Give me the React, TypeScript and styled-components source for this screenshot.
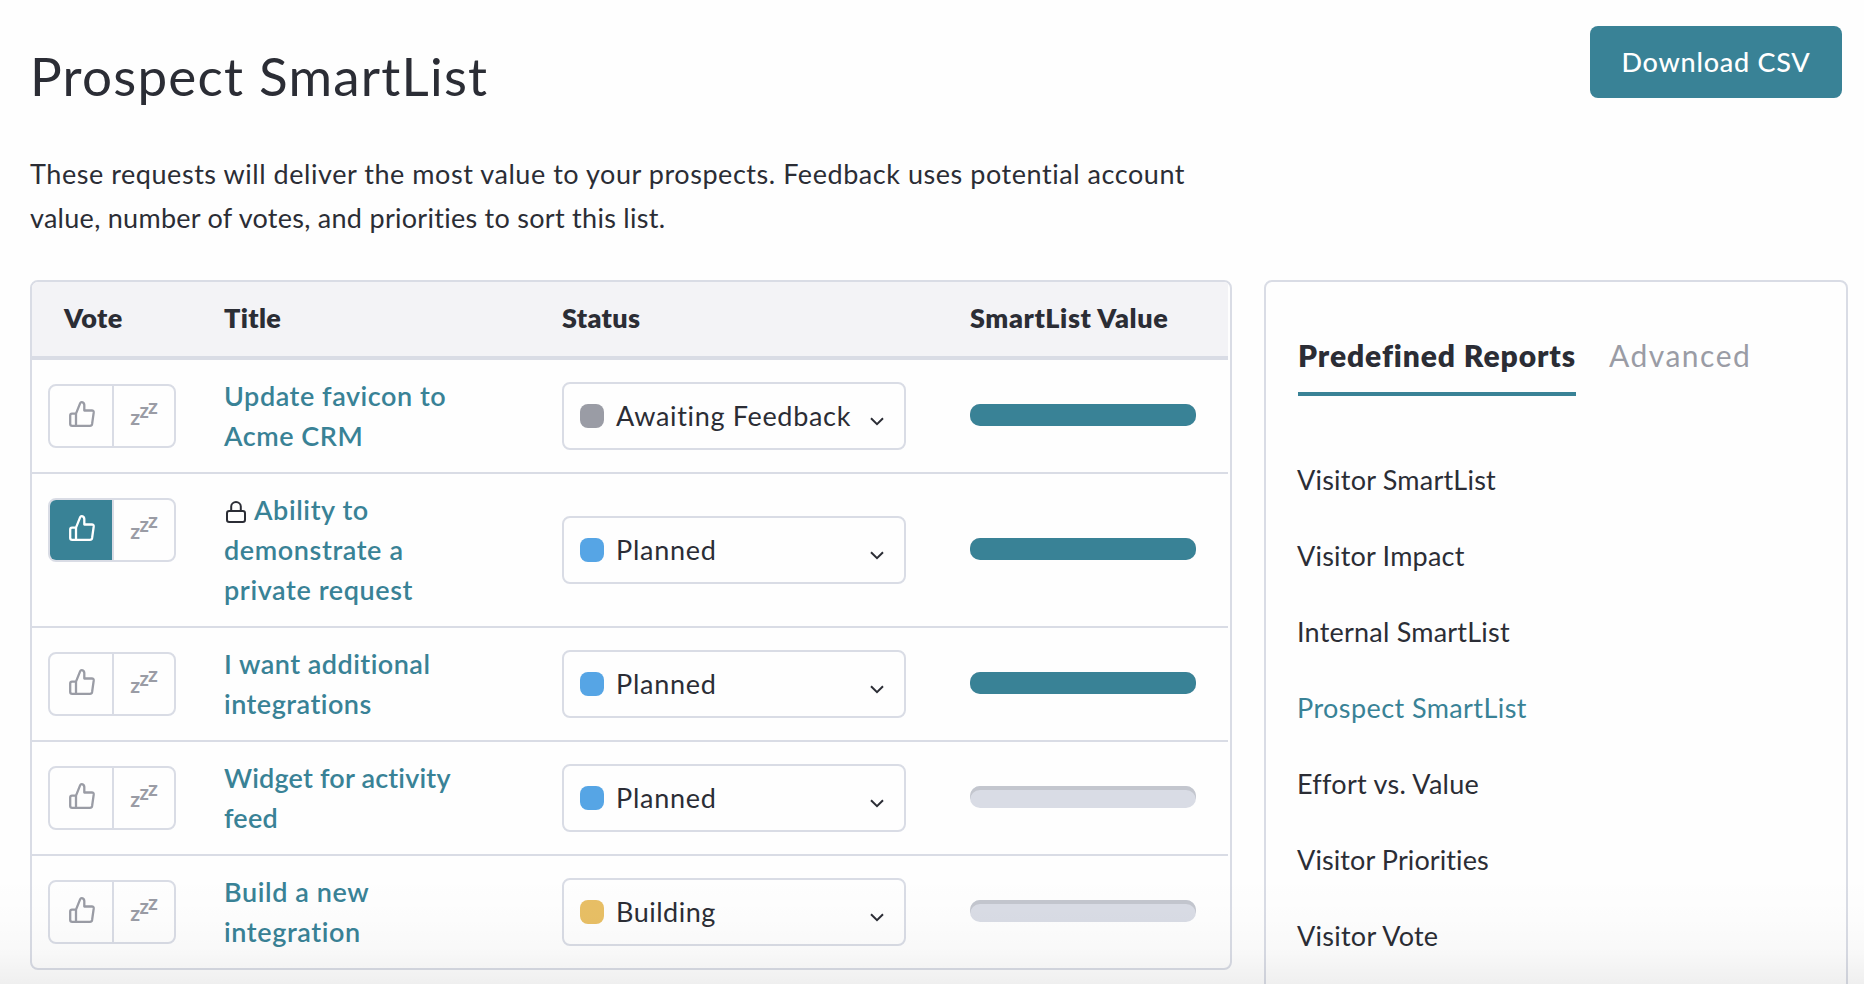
import React from "react";
import styled, { createGlobalStyle } from "styled-components";

type Status = { name: string; color: string; tracking: number };

const AWAITING: Status = { name: "Awaiting Feedback", color: "#9a9ca5", tracking: 0.68 };
const PLANNED: Status = { name: "Planned", color: "#56a5e5", tracking: 0.75 };
const BUILDING: Status = { name: "Building", color: "#e8bf65", tracking: 0.5 };

const requests = [
  { id: 1, title: "Update favicon to Acme CRM", status: AWAITING, value: 100, tracking: 0.55 },
  {
    id: 2,
    title: "Ability to demonstrate a private request",
    status: PLANNED,
    value: 100,
    voted: true,
    locked: true,
    tracking: 0.6,
  },
  { id: 3, title: "I want additional integrations", status: PLANNED, value: 100, tracking: 0.48 },
  { id: 4, title: "Widget for activity feed", status: PLANNED, value: 0, tracking: 0.18 },
  { id: 5, title: "Build a new integration", status: BUILDING, value: 0, tracking: 0.6 },
];

const reports = [
  { name: "Visitor SmartList", tracking: 0.22 },
  { name: "Visitor Impact", tracking: 0.2 },
  { name: "Internal SmartList", tracking: 0.22 },
  { name: "Prospect SmartList", tracking: 0.42 },
  { name: "Effort vs. Value", tracking: 0.28 },
  { name: "Visitor Priorities", tracking: 0.1 },
  { name: "Visitor Vote", tracking: 0.26 },
];

function ThumbIcon() {
  return (
    <svg width="26" height="26" viewBox="0 0 26 26" fill="none" stroke="currentColor" strokeWidth="2.3">
      <path
        strokeLinejoin="round"
        d="M7 12.6H3Q1.2 12.6 1.2 14.4V22.9Q1.2 24.8 3.2 24.8H21Q22.8 24.8 23.1 23L24.7 11.7Q24.9 9.5 22.8 9.5H15.3V3.8Q15 1.2 12.5 1.2Q11.6 1.2 11.2 2.1L7 12.6V24.8"
      />
    </svg>
  );
}

function SnoozeIcon() {
  return (
    <svg width="30" height="48" viewBox="-1 -12 30 48" fill="currentColor">
      <text x="0.2" y="23.3" fontSize="21.5">z</text>
      <text x="9.6" y="16.4" fontSize="20.5">z</text>
      <text x="17.9" y="12.3" fontSize="21.5">z</text>
    </svg>
  );
}

function LockIcon() {
  return (
    <svg width="20" height="22" viewBox="0 0 20 22" fill="none" stroke="currentColor" strokeWidth="2">
      <rect x="1" y="10" width="18" height="11" rx="2.2" />
      <path d="M5.2 10V5.6a4.8 4.6 0 0 1 9.6 0V10" />
    </svg>
  );
}

export default function App() {
  return (
    <>
      <GlobalStyle />
      <Page>
        <Header>
          <Heading>Prospect SmartList</Heading>
          <DownloadButton>Download CSV</DownloadButton>
        </Header>
        <Description>
          These requests will deliver the most value to your prospects. Feedback uses potential account{" "}
          <Tail>value, number of votes, and priorities to sort this list.</Tail>
        </Description>

        <Content>
          <Table>
            <HeadRow>
              <VoteHead>Vote</VoteHead>
              <span>Title</span>
              <span>Status</span>
              <ValueHead>SmartList Value</ValueHead>
            </HeadRow>
            {requests.map((request) => (
              <Row key={request.id}>
                <VoteGroup>
                  <VoteButton aria-label="Vote" $active={request.voted}>
                    <ThumbIcon />
                  </VoteButton>
                  <VoteButton aria-label="Snooze">
                    <SnoozeIcon />
                  </VoteButton>
                </VoteGroup>
                <Title $tracking={request.tracking}>
                  {request.locked && (
                    <Lock>
                      <LockIcon />
                    </Lock>
                  )}
                  {request.title}
                </Title>
                <Select>
                  <Swatch $color={request.status.color} />
                  <SelectLabel $tracking={request.status.tracking}>{request.status.name}</SelectLabel>
                  <Chevron width="14" height="9" viewBox="0 0 14 9">
                    <path d="M1 1.3l6 5.8 6-5.8" />
                  </Chevron>
                </Select>
                <Bar>
                  <BarFill style={{ width: `${request.value}%` }} />
                </Bar>
              </Row>
            ))}
          </Table>

          <Panel>
            <Tabs>
              <Tab $active>Predefined Reports</Tab>
              <Tab>Advanced</Tab>
            </Tabs>
            <ReportList>
              {reports.map((report) => (
                <Report
                  key={report.name}
                  $active={report.name === "Prospect SmartList"}
                  $tracking={report.tracking}
                >
                  {report.name}
                </Report>
              ))}
            </ReportList>
          </Panel>
        </Content>
        <BottomShade />
      </Page>
    </>
  );
}

const GlobalStyle = createGlobalStyle`
  * {
    box-sizing: border-box;
  }

  body {
    margin: 0;
    background: #fff;
    color: #2b2d35;
    font-family: Lato, "Open Sans", sans-serif;
    font-size: 27px;
    line-height: 40px;
    font-variant-ligatures: none;
  }

  button {
    font: inherit;
    border: 0;
    padding: 0;
    background: none;
  }

  svg {
    display: block;
    flex: none;
  }
`;

const Page = styled.main`
  position: relative;
  height: 984px;
  padding: 26px 16px 0 30px;
  overflow: hidden;
  background: #fefefe;
`;

const Header = styled.header`
  display: flex;
  justify-content: space-between;
  align-items: flex-start;
  padding-right: 6px;
`;

const Heading = styled.h1`
  margin: 18px 0 0;
  font-size: 53px;
  font-weight: 400;
  line-height: 64px;
  letter-spacing: 1.22px;
`;

const DownloadButton = styled.button`
  width: 252px;
  height: 72px;
  border-radius: 8px;
  background: #398296;
  color: #fff;
  font-weight: 500;
  letter-spacing: 0.75px;
`;

const Description = styled.p`
  width: 1190px;
  margin: 44px 0 40px;
  line-height: 44px;
  letter-spacing: 0.55px;
`;

const Tail = styled.span`
  letter-spacing: 0.28px;
`;

const Content = styled.div`
  display: flex;
  align-items: flex-start;
  gap: 32px;
`;

const Table = styled.section`
  width: 1202px;
  padding-right: 2px;
  border: 2px solid #d9dce5;
  border-radius: 8px;
  overflow: hidden;
`;

const Row = styled.div`
  display: grid;
  grid-template-columns: 176px 338px 408px 226px;
  align-items: center;
  padding: 16px 0 16px 16px;

  & + & {
    border-top: 2px solid #d9dce5;
  }
`;

const HeadRow = styled.div`
  display: grid;
  grid-template-columns: 176px 338px 408px 226px;
  padding: 16px 0 18px 16px;
  border-bottom: 4px solid #d9dce5;
  background: #f3f3f6;
  font-weight: 800;
  letter-spacing: 0.35px;
`;

const VoteHead = styled.span`
  padding-left: 16px;
`;

const ValueHead = styled.span`
  letter-spacing: 0.6px;
`;

const VoteGroup = styled.div`
  display: flex;
  align-self: start;
  width: 128px;
  height: 64px;
  margin-top: 8px;
  border: 2px solid #d9dce5;
  border-radius: 8px;
  overflow: hidden;
`;

const VoteButton = styled.button<{ $active?: boolean }>`
  display: flex;
  flex: none;
  align-items: center;
  justify-content: center;
  width: 62px;
  padding: 0 0 4px 2px;
  background: ${({ $active }) => ($active ? "#398296" : "transparent")};
  color: ${({ $active }) => ($active ? "#fff" : "#9a9ca5")};
  font-weight: 700;

  & + & {
    padding-left: 0;
    border-left: 2px solid #d9dce5;
  }
`;

const Title = styled.a<{ $tracking: number }>`
  max-width: 254px;
  color: #398296;
  font-weight: 600;
  letter-spacing: ${({ $tracking }) => $tracking}px;
`;

const Lock = styled.span`
  display: inline-block;
  margin: 0 8px 0 2px;
  color: #2b2d35;
  vertical-align: -3px;
`;

const Select = styled.div`
  display: flex;
  align-items: center;
  width: 344px;
  height: 68px;
  padding: 0 20px 0 16px;
  border: 2px solid #d9dce5;
  border-radius: 8px;
`;

const Swatch = styled.span<{ $color: string }>`
  width: 24px;
  height: 24px;
  margin-right: 12px;
  border-radius: 8px;
  background: ${({ $color }) => $color};
`;

const SelectLabel = styled.span<{ $tracking: number }>`
  flex: 1;
  white-space: nowrap;
  letter-spacing: ${({ $tracking }) => $tracking}px;
`;

const Chevron = styled.svg`
  margin-top: 10px;
  fill: none;
  stroke: #2b2d35;
  stroke-width: 2;
`;

const Bar = styled.div`
  width: 226px;
  height: 22px;
  margin-bottom: 2px;
  border-radius: 10px;
  background: #d9dce5;
  box-shadow: inset 0 4px 0 #c3c6ce;
  overflow: hidden;
`;

const BarFill = styled.div`
  height: 100%;
  background: #398296;
`;

const Panel = styled.aside`
  width: 584px;
  height: 800px;
  padding: 53px 32px 0 31px;
  border: 2px solid #d9dce5;
  border-radius: 8px;
`;

const Tabs = styled.div`
  display: flex;
  gap: 33px;
  margin-left: 1px;
  font-size: 30px;
`;

const Tab = styled.span<{ $active?: boolean }>`
  padding-bottom: 17px;
  border-bottom: 4px solid ${({ $active }) => ($active ? "#398296" : "transparent")};
  color: ${({ $active }) => ($active ? "#2b2d35" : "#9a9ca5")};
  font-weight: ${({ $active }) => ($active ? 800 : 400)};
  letter-spacing: ${({ $active }) => ($active ? 0.91 : 1.5)}px;
`;

const ReportList = styled.nav`
  display: flex;
  flex-direction: column;
  gap: 36px;
  margin-top: 64px;
`;

const Report = styled.a<{ $active: boolean; $tracking: number }>`
  color: ${({ $active }) => ($active ? "#398296" : "inherit")};
  letter-spacing: ${({ $tracking }) => $tracking}px;
`;

/* soft shade over the lower edge of the page */
const BottomShade = styled.div`
  position: absolute;
  right: 0;
  bottom: 0;
  left: 0;
  height: 110px;
  background: linear-gradient(
    rgba(0, 0, 0, 0),
    rgba(0, 0, 0, 0.006) 40%,
    rgba(0, 0, 0, 0.022) 72%,
    rgba(0, 0, 0, 0.06)
  );
  pointer-events: none;
`;
